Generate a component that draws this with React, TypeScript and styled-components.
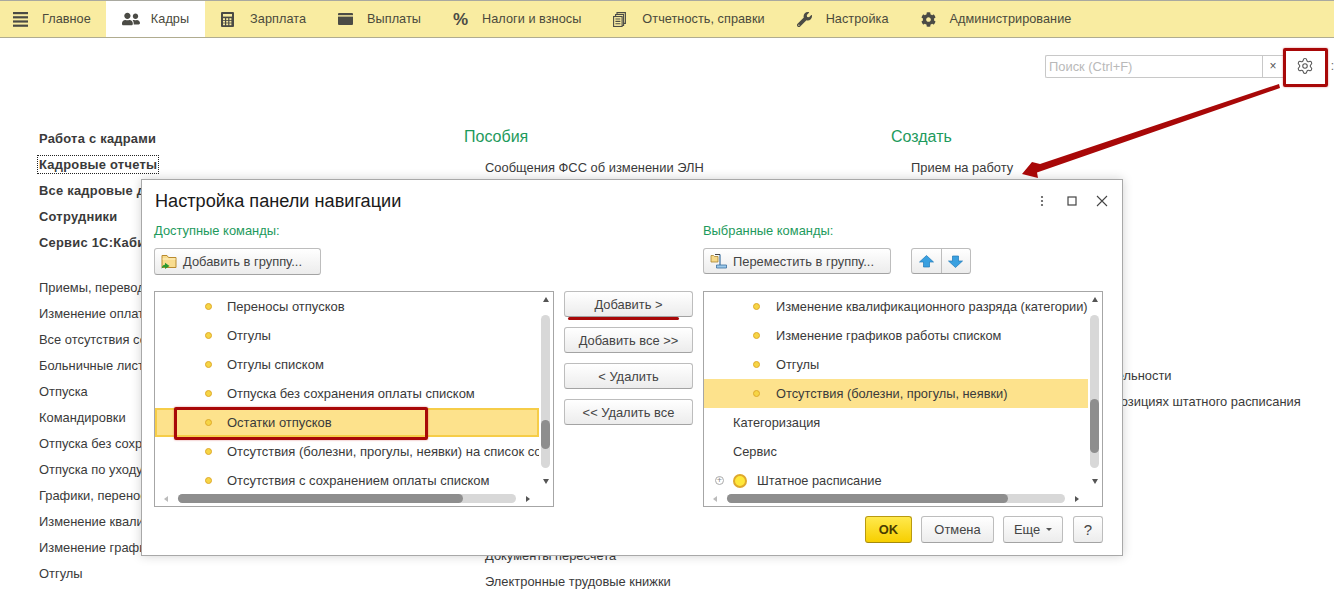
import React from 'react';
import styled, { createGlobalStyle } from 'styled-components';
import { FaWrench, FaCog, FaUserFriends } from 'react-icons/fa';
import { Settings } from 'lucide-react';

const Global = createGlobalStyle`
  html, body { margin: 0; padding: 0; background: #fff; }
  body { width: 1334px; height: 590px; overflow: hidden; font-family: "Liberation Sans", Arial, sans-serif; font-size: 12.9px; color: #3a3a3a; }
  * { box-sizing: border-box; }
`;

const Page = styled.div`position: relative; width: 1334px; height: 590px; overflow: hidden;`;

const TopBar = styled.nav`
  display: flex; height: 38px; background: #f9eca1; font-size: 12.7px; letter-spacing: 0.05px;
  border-top: 1px solid #a9a9a0; border-bottom: 1px solid #b0ac90;
`;
const TopItem = styled.div<{ $active?: boolean; $first?: boolean }>`
  display: flex; align-items: center; height: 100%;
  padding: 0 ${p => (p.$first ? '15px' : '16px')} 0 ${p => (p.$first ? '13px' : '16px')};
  background: ${p => (p.$active ? '#fff' : 'transparent')};
  color: #4a4a3c; white-space: nowrap;
`;
const TopIcon = styled.span`
  width: 29px; flex: none; display: flex; align-items: center; color: #4b4b45;
`;
const Percent = styled.span`font-size: 17px; font-weight: 700; line-height: 1; color: #4b4b45;`;

const SearchRow = styled.div`
  display: flex; justify-content: flex-end; align-items: center;
  height: 86px; padding: 0 0 30px 0;
`;
const SearchBox = styled.div`
  display: flex; align-items: center; width: 238px; height: 23px;
  border: 1px solid #c8c8c8; border-radius: 2px 0 0 2px; border-right: none;
`;
const SearchInput = styled.div`
  flex: 1; height: 100%; line-height: 21px; padding-left: 3px; color: #b9b9b9;
  border-right: 1px solid #c8c8c8;
`;
const SearchClear = styled.div`width: 20px; text-align: center; color: #555; font-size: 12px;`;
const GearCell = styled.div`
  width: 51px; display: flex; align-items: center; padding-left: 13px; color: #555; position: relative;
`;
const Dots = styled.span`position: absolute; right: 0; top: 3px; color: #666; font-size: 12px; line-height: 1;`;

const Columns = styled.main`display: flex; padding: 2px 0 0 39px;`;
const Col = styled.section<{ $w: number }>`width: ${p => p.$w}px; flex: none;`;
const NavRow = styled.div<{ $bold?: boolean; $indent?: number; $mt?: number }>`
  height: 26px; line-height: 26px; white-space: nowrap;
  font-weight: ${p => (p.$bold ? 700 : 400)};
  letter-spacing: ${p => (p.$bold ? '0.25px' : '0')};
  padding-left: ${p => p.$indent ?? 0}px;
  margin-top: ${p => p.$mt ?? 0}px;
`;
const Focused = styled.span`outline: 1px dotted #222; outline-offset: 1px; padding: 0;`;
const SectionHead = styled.h2`
  margin: 0 0 7px 0; height: 22px; line-height: 22px; font-size: 16px; font-weight: 400; color: #1d9a5c;
`;

const Dialog = styled.div`
  position: absolute; left: 141px; top: 179px; width: 982px; height: 377px;
  background: #fff; border: 1px solid #a8a8a8; box-shadow: 0 0 10px rgba(0,0,0,.18);
  padding: 0 19px 0 12px;
`;
const TitleBar = styled.header`display: flex; align-items: center; justify-content: space-between; height: 42px;`;
const Title = styled.h1`margin: 0 0 0 1px; font-size: 18.15px; font-weight: 400; color: #1a1a1a;`;
const WinButtons = styled.div`display: flex; align-items: center; gap: 16px; margin-right: -6px; color: #444;`;
const DialogGrid = styled.div`display: grid; grid-template-columns: 400px 129px 400px; column-gap: 10px;`;
const Pane = styled.div`display: flex; flex-direction: column;`;
const PaneLabel = styled.div`height: 18px; line-height: 18px; margin-bottom: 8px; color: #1d9a5c;`;
const PaneTools = styled.div`display: flex; gap: 20px; height: 27px; margin-bottom: 16px;`;
const Btn = styled.button<{ $w?: number; $h?: number; $primary?: boolean; $strong?: boolean; $start?: boolean }>`
  width: ${p => (p.$w ? `${p.$w}px` : 'auto')}; height: ${p => p.$h ?? 27}px; flex: none;
  display: flex; align-items: center; justify-content: ${p => (p.$start ? 'flex-start' : 'center')};
  gap: 6px; padding: 0 0 0 ${p => (p.$start ? 6 : 0)}px;
  font: inherit; color: ${p => (p.$primary ? '#4a3c00' : '#444')};
  font-weight: ${p => (p.$primary ? 700 : 400)};
  font-size: ${p => (p.$strong ? '15px' : 'inherit')};
  background: ${p => (p.$primary ? 'linear-gradient(#ffe94d,#f7cf00)' : 'linear-gradient(#fff,#ececec)')};
  border: 1px solid ${p => (p.$primary ? '#b99a10' : '#bdbdbd')};
  border-bottom-color: ${p => (p.$primary ? '#a58a0c' : '#a3a3a3')};
  border-radius: 3px;
`;
const HelpBtn = styled(Btn)`margin-left: 1px;`;
const ArrowGroup = styled.div`
  display: flex; width: 60px; height: 26px; border: 1px solid #bdbdbd; border-bottom-color: #a3a3a3;
  border-radius: 3px; background: linear-gradient(#fff,#ececec);
`;
const ArrowCell = styled.div<{ $div?: boolean }>`
  flex: 1; display: flex; align-items: center; justify-content: center;
  border-right: ${p => (p.$div ? '1px solid #bdbdbd' : 'none')};
`;
const CenterCol = styled.div`display: flex; flex-direction: column; gap: 10px; padding-top: 69px;`;

const List = styled.div<{ $fs: number }>`position: relative; height: 216px; border: 1px solid #a6a6a6; overflow: hidden; background: #fff; font-size: ${p => p.$fs}px;`;
const Row = styled.div<{ $sel?: boolean; $ring?: boolean; $pad: number }>`
  display: flex; align-items: center; width: 384px; height: 29px; white-space: nowrap; overflow: hidden;
  padding-left: ${p => p.$pad}px; color: #3a3a3a;
  background: ${p => (p.$sel ? '#fde28c' : 'transparent')};
  box-shadow: ${p => (p.$ring ? 'inset 0 0 0 2px #f6cd48' : 'none')};
`;
const Bullet = styled.span<{ $big?: boolean; $gap: number }>`
  flex: none; width: ${p => (p.$big ? 14 : 7)}px; height: ${p => (p.$big ? 14 : 7)}px; border-radius: 50%;
  margin-right: ${p => p.$gap}px;
  background: ${p => (p.$big ? '#ffe83a' : '#f6d545')}; border: ${p => (p.$big ? 2 : 1)}px solid #dfa92c;
`;
const Plus = styled.span`
  flex: none; width: 9px; height: 9px; border: 1px solid #aaa; border-radius: 50%; margin-right: 9px;
  color: #888; font-size: 9px; line-height: 7px; text-align: center;
`;
const VTrack = styled.div`position: absolute; right: 3px; top: 23px; width: 9px; height: 153px; background: #d8d8d8; border-radius: 5px;`;
const VThumb = styled.div<{ $top: number; $h: number }>`
  position: absolute; left: 0; width: 9px; top: ${p => p.$top}px; height: ${p => p.$h}px; background: #8e8e8e; border-radius: 5px;
`;
const HTrack = styled.div`position: absolute; left: 23px; bottom: 3px; width: 338px; height: 9px; background: #d8d8d8; border-radius: 5px;`;
const HThumb = styled.div<{ $w: number }>`
  position: absolute; left: 0; top: 0; height: 9px; width: ${p => p.$w}px; background: #8e8e8e; border-radius: 5px;
`;
const Tri = styled.span<{ $dir: 'up' | 'down' | 'left' | 'right' }>`
  position: absolute; width: 0; height: 0; border: 3.5px solid transparent;
  ${p => p.$dir === 'up' && 'right:4px; top:5px; border-bottom:5px solid #555; border-top:0;'}
  ${p => p.$dir === 'down' && 'right:4px; top:187px; border-top:5px solid #555; border-bottom:0;'}
  ${p => p.$dir === 'left' && 'left:9px; bottom:4px; border-right:4px solid #bbb; border-left:0;'}
  ${p => p.$dir === 'right' && 'left:371px; bottom:4px; border-left:4px solid #555; border-right:0;'}
`;
const Footer = styled.footer`display: flex; justify-content: flex-end; gap: 9px; margin-top: 9px;`;
const Caret = styled.span`width: 0; height: 0; border: 3px solid transparent; border-top: 3px solid #555; border-bottom: 0; margin-left: 0;`;

const RedBox = styled.div<{ $x: number; $y: number; $w: number; $h: number }>`
  position: absolute; left: ${p => p.$x}px; top: ${p => p.$y}px; width: ${p => p.$w}px; height: ${p => p.$h}px;
  border: 3px solid #a80808; border-radius: 2px; box-shadow: 0 0 2px rgba(200,40,40,.6);
`;
const Underline = styled.div`
  position: absolute; left: 568px; top: 317px; width: 111px; height: 2.5px; background: #a80808; border-radius: 2px;
`;
const ArrowOverlay = styled.svg`position: absolute; left: 0; top: 0; pointer-events: none;`;

const Burger = () => (
  <svg width="15" height="15" viewBox="0 0 15 15" fill="#4b4b45"><rect y="0" width="15" height="2.2" /><rect y="4.2" width="15" height="2.2" /><rect y="8.4" width="15" height="2.2" /><rect y="12.6" width="15" height="2.2" /></svg>
);
const Calc = () => (
  <svg width="13" height="15" viewBox="0 0 13 15"><rect width="13" height="15" rx="1" fill="#4b4b45" /><rect x="2" y="2" width="9" height="2.6" fill="#f9eca1" />{[6.2, 8.8, 11.4].flatMap(y => [2, 5.2, 8.4].map(x => <rect key={`${x}-${y}`} x={x} y={y} width="2" height="1.8" fill="#f9eca1" />))}</svg>
);
const Wallet = () => (
  <svg width="15" height="12" viewBox="0 0 15 12"><rect width="15" height="12" rx="1" fill="#4b4b45" /><rect y="2.2" width="15" height="1.4" fill="#f9eca1" /></svg>
);
const Docs = () => (
  <svg width="13" height="15" viewBox="0 0 13 15" fill="none" stroke="#4b4b45" strokeWidth="1.1"><path d="M4 2.500V.6h8.400v10.800h-1.800" /><path d="M2.600 4.500V2.500h8v11h-1.500" /><rect x=".6" y="4.500" width="8.500" height="10" fill="#f9eca1" /><path d="M2.400 7h5M2.400 9.400h5M2.400 11.800h5" /></svg>
);
const FolderAdd = () => (
  <svg width="16" height="15" viewBox="0 0 16 15"><path d="M1 1.500h5l1.500 2H15v10H1z" fill="#f8dc8e" stroke="#b98a2e" /><path d="M1.500 5h13" stroke="#fff2c4" /><path d="M.5 14.800c.2-2.400 1.500-3.800 3.500-4V8.800l4.500 3.300L4 15v-2c-1.400 0-2.600.6-3.500 1.800z" fill="#2a9a2f" /></svg>
);
const FolderMove = () => (
  <svg width="17" height="16" viewBox="0 0 17 16"><path d="M1 2.500h2.500l1 1H8v5.500H1z" fill="#f6d98a" stroke="#a9832f" strokeWidth=".8" /><path d="M10 1.500v10.500" stroke="#3a6f9f" strokeWidth="1.200" fill="none" /><path d="M5 1.500h5" stroke="#333" strokeWidth=".9" /><path d="M6.500 12h10v3h-10z" fill="#9cc9ea" stroke="#3a6f9f" strokeWidth=".8" /></svg>
);
const BlueArrow = ({ down }: { down?: boolean }) => (
  <svg width="15" height="13" viewBox="0 0 15 13"><path d={down ? 'M4.500 1h6v5h4L7.500 12.500.500 6h4z' : 'M7.500.500l7 6.500h-4v5h-6V7h-4z'} fill="#39a0e0" stroke="#1f78b8" strokeWidth=".7" /></svg>
);

const left = ['Приемы, переводы, увольнения', 'Изменение оплаты труда', 'Все отсутствия сотрудников', 'Больничные листы', 'Отпуска', 'Командировки', 'Отпуска без сохранения оплаты', 'Отпуска по уходу за детьми', 'Графики, переносы отпусков', 'Изменение квалификационного разряда', 'Изменение графиков работы', 'Отгулы'];

export default function App() {
  return (
    <Page>
      <Global />
      <TopBar>
        <TopItem $first><TopIcon><Burger /></TopIcon>Главное</TopItem>
        <TopItem $active><TopIcon><FaUserFriends size={18} /></TopIcon>Кадры</TopItem>
        <TopItem><TopIcon><Calc /></TopIcon>Зарплата</TopItem>
        <TopItem><TopIcon><Wallet /></TopIcon>Выплаты</TopItem>
        <TopItem><TopIcon><Percent>%</Percent></TopIcon>Налоги и взносы</TopItem>
        <TopItem><TopIcon><Docs /></TopIcon>Отчетность, справки</TopItem>
        <TopItem><TopIcon><FaWrench size={15} /></TopIcon>Настройка</TopItem>
        <TopItem><TopIcon><FaCog size={15} /></TopIcon>Администрирование</TopItem>
      </TopBar>
      <SearchRow>
        <SearchBox>
          <SearchInput>Поиск (Ctrl+F)</SearchInput>
          <SearchClear>×</SearchClear>
        </SearchBox>
        <GearCell><Settings size={18} strokeWidth={1.4} /><Dots>:</Dots></GearCell>
      </SearchRow>
      <Columns>
        <Col $w={425}>
          <NavRow $bold>Работа с кадрами</NavRow>
          <NavRow $bold><Focused>Кадровые отчеты</Focused></NavRow>
          <NavRow $bold>Все кадровые документы</NavRow>
          <NavRow $bold>Сотрудники</NavRow>
          <NavRow $bold>Сервис 1С:Кабинет сотрудника</NavRow>
          {left.map((t, i) => <NavRow key={t} $mt={i === 0 ? 19 : 0}>{t}</NavRow>)}
        </Col>
        <Col $w={427}>
          <SectionHead>Пособия</SectionHead>
          <NavRow $indent={21}>Сообщения ФСС об изменении ЭЛН</NavRow>
          <NavRow $indent={21} $mt={362}>Документы пересчета</NavRow>
          <NavRow $indent={21}>Электронные трудовые книжки</NavRow>
        </Col>
        <Col $w={443}>
          <SectionHead>Создать</SectionHead>
          <NavRow $indent={20}>Прием на работу</NavRow>
          <NavRow $indent={20} $mt={182}>СЗВ-ТД сведения о трудовой деятельности</NavRow>
          <NavRow $indent={20}>Сведения о занятых и вакантных позициях штатного расписания</NavRow>
        </Col>
      </Columns>

      <Dialog>
        <TitleBar>
          <Title>Настройка панели навигации</Title>
          <WinButtons>
            <svg width="14" height="14" viewBox="0 0 14 14" fill="#555"><circle cx="7" cy="3" r="1.100" /><circle cx="7" cy="7" r="1.100" /><circle cx="7" cy="11" r="1.100" /></svg>
            <svg width="14" height="14" viewBox="0 0 14 14" fill="none" stroke="#444" strokeWidth="1.200"><rect x="3" y="3" width="8" height="8" /></svg>
            <svg width="14" height="14" viewBox="0 0 14 14" fill="none" stroke="#444" strokeWidth="1.100"><path d="M2 2l10 10M12 2L2 12" /></svg>
          </WinButtons>
        </TitleBar>
        <DialogGrid>
          <Pane>
            <PaneLabel>Доступные команды:</PaneLabel>
            <PaneTools><Btn $w={167} $start><FolderAdd />Добавить в группу...</Btn></PaneTools>
            <List $fs={13}>
              <Row $pad={50}><Bullet $gap={15} />Переносы отпусков</Row>
              <Row $pad={50}><Bullet $gap={15} />Отгулы</Row>
              <Row $pad={50}><Bullet $gap={15} />Отгулы списком</Row>
              <Row $pad={50}><Bullet $gap={15} />Отпуска без сохранения оплаты списком</Row>
              <Row $pad={50} $sel $ring><Bullet $gap={15} />Остатки отпусков</Row>
              <Row $pad={50}><Bullet $gap={15} />Отсутствия (болезни, прогулы, неявки) на список сотрудников</Row>
              <Row $pad={50}><Bullet $gap={15} />Отсутствия с сохранением оплаты списком</Row>
              <Tri $dir="up" /><VTrack><VThumb $top={105} $h={29} /></VTrack><Tri $dir="down" />
              <Tri $dir="left" /><HTrack><HThumb $w={285} /></HTrack><Tri $dir="right" />
            </List>
          </Pane>
          <CenterCol>
            <Btn $h={26}>Добавить &gt;</Btn>
            <Btn $h={26}>Добавить все &gt;&gt;</Btn>
            <Btn $h={26}>&lt; Удалить</Btn>
            <Btn $h={26}>&lt;&lt; Удалить все</Btn>
          </CenterCol>
          <Pane>
            <PaneLabel>Выбранные команды:</PaneLabel>
            <PaneTools>
              <Btn $w={188} $h={26} $start><FolderMove />Переместить в группу...</Btn>
              <ArrowGroup>
                <ArrowCell $div><BlueArrow /></ArrowCell>
                <ArrowCell><BlueArrow down /></ArrowCell>
              </ArrowGroup>
            </PaneTools>
            <List $fs={12.8}>
              <Row $pad={49}><Bullet $gap={16} />Изменение квалификационного разряда (категории)</Row>
              <Row $pad={49}><Bullet $gap={16} />Изменение графиков работы списком</Row>
              <Row $pad={49}><Bullet $gap={16} />Отгулы</Row>
              <Row $pad={49} $sel><Bullet $gap={16} />Отсутствия (болезни, прогулы, неявки)</Row>
              <Row $pad={29}>Категоризация</Row>
              <Row $pad={29}>Сервис</Row>
              <Row $pad={11}><Plus>+</Plus><Bullet $big $gap={10} />Штатное расписание</Row>
              <Tri $dir="up" /><VTrack><VThumb $top={84} $h={54} /></VTrack><Tri $dir="down" />
              <Tri $dir="left" /><HTrack><HThumb $w={281} /></HTrack><Tri $dir="right" />
            </List>
          </Pane>
        </DialogGrid>
        <Footer>
          <Btn $w={47} $primary>OK</Btn>
          <Btn $w={73}>Отмена</Btn>
          <Btn $w={60}>Еще<Caret /></Btn>
          <HelpBtn $w={30} $strong>?</HelpBtn>
        </Footer>
      </Dialog>

      <RedBox $x={1283} $y={48} $w={45} $h={39} />
      <RedBox $x={174} $y={407} $w={254} $h={33} />
      <Underline />
      <ArrowOverlay width="1334" height="590" viewBox="0 0 1334 590">
        <path d="M1279 84 L1040 164 L1032 162 L1022 174 L1038 178 L1037 172.500 L1280 88 Z" fill="#a80808" />
      </ArrowOverlay>
    </Page>
  );
}
